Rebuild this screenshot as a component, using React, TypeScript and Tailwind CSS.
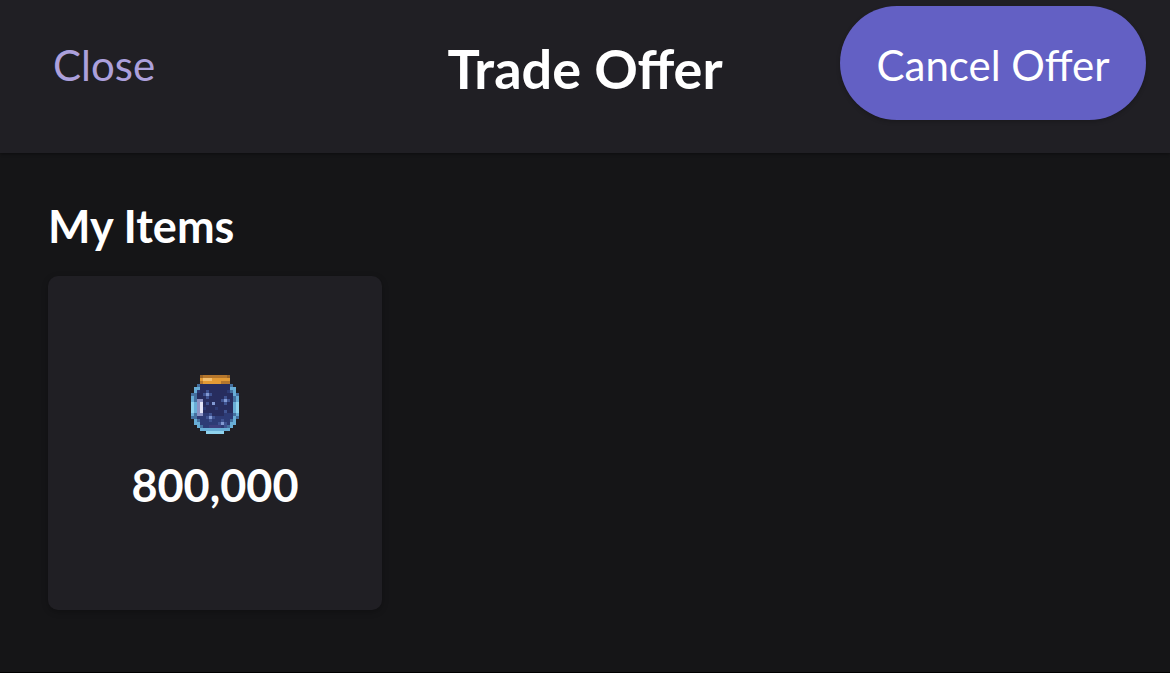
import React from "react";

const jarColors: Record<string, string> = {
  a: "#9a6428",
  o: "#e39a35",
  y: "#f3bf70",
  b: "#b5762c",
  c: "#68add6",
  l: "#8fd3ee",
  d: "#44709f",
  n: "#272d5e",
  m: "#2d3b75",
  p: "#3c3f7c",
  s: "#8299d2",
  t: "#3f5391",
  w: "#e4e5f6",
  g: "#8c93c4",
};

const jarRows = [
  "...abbbbbbbba...",
  "...oyyyoooooo...",
  "...boooooobbb...",
  "..dnnnnnnnnnnd..",
  ".ccnnnnnnnnnncc.",
  ".cmnntnnnnnnmdc.",
  "ddnntstnnnnnnncd",
  "cdnnntnnnnntnndc",
  "cdggnnnnnntstndc",
  "lcgwntnsnnntnncl",
  "lcgwnnnnnnnnnncl",
  "lcgwmnnnmnnnnncl",
  "lcgwnnnnnnntnncl",
  "cdggmmtnnnnmmmdc",
  "ddmmmtstmmmmmmcd",
  ".cdmmmtmmmtmmdc.",
  ".ccmmmmmmtstmcc.",
  "..cdmmppppmtdc..",
  "...cccccccccc...",
  ".....llllll.....",
];

const JarIcon: React.FC = () => (
  <svg
    viewBox="0 0 16 20"
    preserveAspectRatio="none"
    className="h-[59px] w-12 blur-[0.5px]"
    shapeRendering="crispEdges"
  >
    {jarRows.map((row, y) =>
      row
        .split("")
        .map((key, x) =>
          key === "." ? null : (
            <rect
              key={`${x}-${y}`}
              x={x}
              y={y}
              width={1}
              height={1}
              fill={jarColors[key]}
            />
          ),
        ),
    )}
  </svg>
);

interface ItemCardProps {
  amount: number;
}

const ItemCard: React.FC<ItemCardProps> = ({ amount }) => (
  <div className="flex h-[334px] w-[334px] flex-col items-center rounded-[10px] bg-[#201f24] pt-[99px] shadow-[0_2px_6px_rgba(0,0,0,0.25)]">
    <JarIcon />
    <span className="mt-6 text-[45px] leading-[54px] font-bold">
      {amount.toLocaleString("en-US")}
    </span>
  </div>
);

export default function App() {
  return (
    <div className="flex h-[673px] w-[1170px] flex-col overflow-hidden border-b border-black bg-[#151517] font-['Lato',sans-serif] text-white">
      {/* Header */}
      <header className="grid h-[153px] shrink-0 grid-cols-[1fr_auto_1fr] items-start bg-[#201f24] shadow-[0_1px_3px_rgba(0,0,0,0.4)]">
        <button className="mt-[40px] ml-[53px] justify-self-start text-[42px] leading-[50px] text-[#aca0dc]">
          Close
        </button>
        <h1 className="mt-[37px] text-[54px] leading-[64px] font-bold">
          Trade Offer
        </h1>
        <button className="mt-[6px] mr-6 h-[114px] w-[306px] justify-self-end rounded-full bg-[#6360c4] pt-[3px] text-[42px] leading-[50px] shadow-[0_2px_4px_rgba(0,0,0,0.2)]">
          Cancel Offer
        </button>
      </header>

      {/* Items */}
      <main className="px-12 pt-[46px]">
        <h2 className="mb-[23px] text-[45px] leading-[54px] font-bold">
          My Items
        </h2>
        <ItemCard amount={800000} />
      </main>
    </div>
  );
}
